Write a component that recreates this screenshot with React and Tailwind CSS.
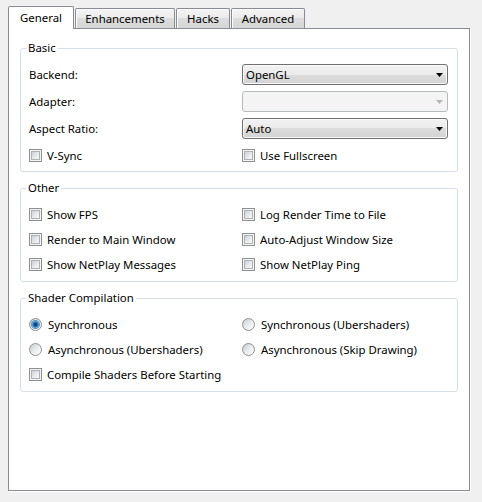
import React from "react";

const FONT = "font-['Noto_Sans','Liberation_Sans',sans-serif]";

function Tab({ label, active, width }) {
  if (active) {
    return (
      <div
        className={`relative z-10 -mb-px h-[23px] ${width} flex items-center justify-center border-x border-t border-[#898c95] bg-white rounded-t-[2px]`}
      >
        <span className="pb-[1px]">{label}</span>
      </div>
    );
  }
  return (
    <div
      className={`h-[20px] ${width} flex items-center justify-center border-x border-t border-[#898c95] rounded-t-[2px] bg-[linear-gradient(to_bottom,#f3f3f3_0%,#ebebeb_50%,#dddddd_50%,#d6d6d6_100%)] shadow-[inset_1px_1px_0_#fcfcfc]`}
    >
      <span>{label}</span>
    </div>
  );
}

function Arrow({ color }) {
  return (
    <svg width="7" height="4" viewBox="0 0 7 4" className="shrink-0">
      <path d="M0 0H7L3.5 4Z" fill={color} />
    </svg>
  );
}

function Combo({ value, disabled }) {
  if (disabled) {
    return (
      <div className="h-[21px] w-[206px] flex items-center justify-end pr-[4px] rounded-[3px] border border-[#b7babc] bg-[#f4f4f4]">
        <Arrow color="#b4b4b4" />
      </div>
    );
  }
  return (
    <div className="h-[21px] w-[206px] flex items-center justify-between pl-[3px] pr-[4px] rounded-[3px] border border-[#707070] bg-[linear-gradient(to_bottom,#f2f2f2_0%,#ebebeb_50%,#dddddd_50%,#d2d2d2_100%)] shadow-[inset_0_0_0_1px_#fbfbfb]">
      <span className="leading-none pt-[1px]">{value}</span>
      <Arrow color="#000000" />
    </div>
  );
}

function Check({ label }) {
  return (
    <div className="h-[21px] flex items-center gap-[5px]">
      <span className="h-[13px] w-[13px] shrink-0 border border-[#8e8f8f] bg-[#f4f4f4] p-[1px]">
        <span className="block h-full w-full border border-[#aeb2b6] bg-[linear-gradient(135deg,#cbcfd5_0%,#e6e8ea_50%,#f7f7f7_100%)]" />
      </span>
      <span className="pt-[1px]">{label}</span>
    </div>
  );
}

function Radio({ label, checked }) {
  return (
    <div className="h-[21px] flex items-center gap-[6px]">
      <span className="h-[13px] w-[13px] shrink-0 rounded-full border border-[#8e8f8f] bg-[linear-gradient(135deg,#c9cccf_0%,#eceeef_55%,#ffffff_100%)] flex items-center justify-center">
        {checked && (
          <span className="h-[7px] w-[7px] rounded-full bg-[radial-gradient(circle_at_50%_50%,#0d2d5a_0%,#1f5f9c_35%,#4aa3dc_70%,#a6dcf5_100%)] shadow-[0_0_0_1px_#5b8fb9]" />
        )}
      </span>
      <span className="pt-[1px]">{label}</span>
    </div>
  );
}

function Group({ title, className = "", children }) {
  return (
    <fieldset
      className={`w-[438px] rounded-[3px] border border-[#d5dfe5] pl-[8px] pt-[8px] ${className}`}
    >
      <legend className="-ml-[3px] px-[2px] leading-[16px]">{title}</legend>
      {children}
    </fieldset>
  );
}

export default function App() {
  return (
    <div
      className={`${FONT} text-[11.4px] text-black w-[482px] h-[502px] bg-[#f0f0f0] pt-[6px] pl-[8px]`}
    >
      <div className="flex items-end h-[22px] gap-[1px]">
        <Tab label="General" active width="w-[66px]" />
        <Tab label="Enhancements" width="w-[100px]" />
        <Tab label="Hacks" width="w-[54px]" />
        <Tab label="Advanced" width="w-[74px]" />
      </div>
      <div className="w-[462px] h-[463px] border border-[#898c95] bg-white shadow-[1px_1px_0_0_#ffffff] pl-[11px] pt-[11px]">
        <Group title="Basic" className="pb-[5px]">
          <div className="grid grid-cols-[213px_206px] auto-rows-[21px] gap-y-[6px]">
            <div className="flex items-center pt-[1px]">Backend:</div>
            <Combo value="OpenGL" />
            <div className="flex items-center pt-[1px]">Adapter:</div>
            <Combo disabled />
            <div className="flex items-center pt-[1px]">Aspect Ratio:</div>
            <Combo value="Auto" />
            <Check label="V-Sync" />
            <Check label="Use Fullscreen" />
          </div>
        </Group>

        <Group title="Other" className="mt-[8px] pb-[6px]">
          <div className="grid grid-cols-[213px_206px] auto-rows-[21px] gap-y-[4px]">
            <Check label="Show FPS" />
            <Check label="Log Render Time to File" />
            <Check label="Render to Main Window" />
            <Check label="Auto-Adjust Window Size" />
            <Check label="Show NetPlay Messages" />
            <Check label="Show NetPlay Ping" />
          </div>
        </Group>

        <Group title="Shader Compilation" className="mt-[8px] pb-[6px]">
          <div className="grid grid-cols-[213px_206px] auto-rows-[21px] gap-y-[4px]">
            <Radio label="Synchronous" checked />
            <Radio label="Synchronous (Ubershaders)" />
            <Radio label="Asynchronous (Ubershaders)" />
            <Radio label="Asynchronous (Skip Drawing)" />
            <Check label="Compile Shaders Before Starting" />
          </div>
        </Group>
      </div>
    </div>
  );
}
